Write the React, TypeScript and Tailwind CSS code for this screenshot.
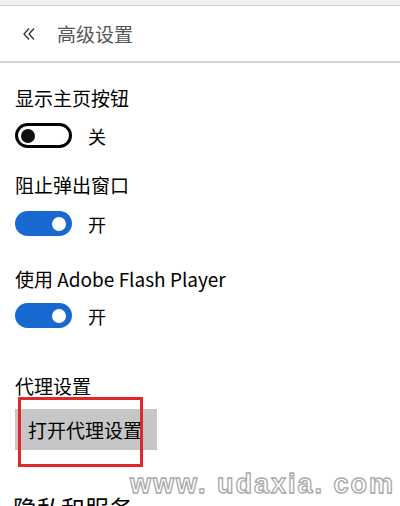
import React from "react";

const cjk = { fontFamily: '"Noto Sans CJK SC", "Noto Sans", sans-serif' };

function Toggle({ on }: { on: boolean }) {
  if (on) {
    return (
      <div className="w-[57px] h-[25px] rounded-full bg-[#1768cf] flex items-center justify-end pr-[6px] box-border">
        <div className="w-[14px] h-[14px] rounded-full bg-white" />
      </div>
    );
  }
  return (
    <div className="w-[57px] h-[25px] rounded-full border-[3px] border-black bg-white flex items-center pl-[3px] box-border">
      <div className="w-[14px] h-[14px] rounded-full bg-[#111]" />
    </div>
  );
}

function ToggleRow({ on }: { on: boolean }) {
  return (
    <div className="flex items-center h-[25px]">
      <Toggle on={on} />
      <span className="ml-[16px] text-[18px] leading-[24px] text-black">{on ? "开" : "关"}</span>
    </div>
  );
}

export default function App() {
  return (
    <div className="relative w-[400px] h-[506px] overflow-hidden bg-white" style={cjk}>
      <div className="h-[6px] bg-[#f0f0f0] border-b border-[#d2d2d2]" />
      <div className="h-[57px] flex items-center border-b-2 border-[#d6d6d6] box-border">
        <svg width="14" height="14" viewBox="0 0 14 14" className="ml-[22px]" fill="none" stroke="#333" strokeWidth="1.3">
          <path d="M7 1.5 L2 7 L7 12.5" />
          <path d="M12 1.5 L7 7 L12 12.5" />
        </svg>
        <span className="ml-[21px] text-[19px] leading-[24px] text-[#555]">高级设置</span>
      </div>
      <div className="pl-[15px] flex flex-col">
        <div className="mt-[23px] h-[24px] text-[19px] leading-[24px] text-black">显示主页按钮</div>
        <div className="mt-[13px]"><ToggleRow on={false} /></div>
        <div className="mt-[25px] h-[24px] text-[19px] leading-[24px] text-black">阻止弹出窗口</div>
        <div className="mt-[14px]"><ToggleRow on={true} /></div>
        <div className="mt-[31px] h-[24px] text-[19px] leading-[24px] text-black">使用 Adobe Flash Player</div>
        <div className="mt-[12px]"><ToggleRow on={true} /></div>
        <div className="mt-[46px] h-[24px] text-[19px] leading-[24px] text-black">代理设置</div>
        <div className="mt-[11px] w-[142px] h-[41px] bg-[#c6c6c6] flex items-center pl-[13px] text-[19px] leading-[24px] text-black whitespace-nowrap">
          打开代理设置
        </div>
        <div className="mt-[43px] h-[30px] text-[24px] leading-[30px] text-black -ml-[2px]">隐私和服务</div>
      </div>
      <div className="absolute left-[18px] top-[397px] w-[125px] h-[70px] border-[3px] border-[#e3262a] box-border" />
      <div
        className="absolute left-[130px] top-[468px] text-[27px] leading-[32px] font-bold tracking-[2px] whitespace-nowrap text-white"
        style={{ fontFamily: '"Liberation Sans", Arial, sans-serif', WebkitTextStroke: "1.3px #a8a8a8" }}
      >
        www. udaxia. com
      </div>
    </div>
  );
}
